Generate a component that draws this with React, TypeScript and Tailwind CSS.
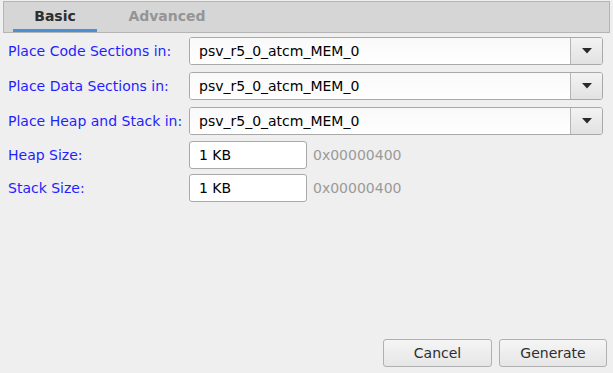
import { ReactNode } from "react";

const font = { fontFamily: '"DejaVu Sans", sans-serif' };

const Label = ({ children }: { children: ReactNode }) => (
  <div className="w-[189px] shrink-0 pl-[8px] text-[14px] text-[#1f1fff]">
    {children}
  </div>
);

const Combo = ({ value }: { value: string }) => (
  <div className="flex h-[28px] w-[414px] overflow-hidden rounded-[3px] border border-[#a9a9a9] bg-white">
    <div className="flex flex-1 items-center bg-gradient-to-b from-[#f9f9f9] to-white pl-[9px] text-[14px] text-black">
      {value}
    </div>
    <div className="flex w-[32px] items-center justify-center border-l border-[#b5b5b5] bg-gradient-to-b from-[#f3f3f3] to-[#e2e2e2]">
      <svg width="10" height="6" viewBox="0 0 10 6">
        <path d="M0 0H10L5 5.5Z" fill="#2b2b2b" />
      </svg>
    </div>
  </div>
);

const SizeField = ({ value, hex }: { value: string; hex: string }) => (
  <div className="flex items-center">
    <div className="flex h-[28px] w-[118px] items-center rounded-[3px] border border-[#a9a9a9] bg-white pl-[9px] text-[14px] text-black">
      {value}
    </div>
    <span className="ml-[6px] text-[14px] text-[#9a9a9a]">{hex}</span>
  </div>
);

export default function App() {
  return (
    <div
      className="flex h-[373px] w-[613px] flex-col bg-[#efefef]"
      style={font}
    >
      <div className="mx-[3px] mt-[1px] flex h-[32px] border border-[#b4b4b4] bg-[#d6d6d6]">
        <div className="ml-[9px] flex w-[84px] items-center justify-center border-b-[3px] border-[#4a90d9] pt-[2px] text-[14px] font-bold text-[#2e2e2e]">
          Basic
        </div>
        <div className="ml-[17px] flex w-[106px] items-center justify-center pb-[1px] text-[14px] font-bold text-[#959595]">
          Advanced
        </div>
      </div>

      <div className="mt-[4px] flex flex-col">
        <div className="flex items-center">
          <Label>Place Code Sections in:</Label>
          <Combo value="psv_r5_0_atcm_MEM_0" />
        </div>
        <div className="mt-[7px] flex items-center">
          <Label>Place Data Sections in:</Label>
          <Combo value="psv_r5_0_atcm_MEM_0" />
        </div>
        <div className="mt-[7px] flex items-center">
          <Label>Place Heap and Stack in:</Label>
          <Combo value="psv_r5_0_atcm_MEM_0" />
        </div>
        <div className="mt-[6px] flex items-center">
          <Label>Heap Size:</Label>
          <SizeField value="1 KB" hex="0x00000400" />
        </div>
        <div className="mt-[5px] flex items-center">
          <Label>Stack Size:</Label>
          <SizeField value="1 KB" hex="0x00000400" />
        </div>
      </div>

      <div className="mt-auto mb-[6px] mr-[6px] flex justify-end gap-[7px]">
        <button className="h-[28px] w-[109px] rounded-[3px] border border-[#b0b0b0] bg-gradient-to-b from-[#f5f5f5] to-[#e6e6e6] text-[14px] text-[#2e2e2e]">
          Cancel
        </button>
        <button className="h-[28px] w-[108px] rounded-[3px] border border-[#b0b0b0] bg-gradient-to-b from-[#f5f5f5] to-[#e6e6e6] text-[14px] text-[#2e2e2e]">
          Generate
        </button>
      </div>
    </div>
  );
}
